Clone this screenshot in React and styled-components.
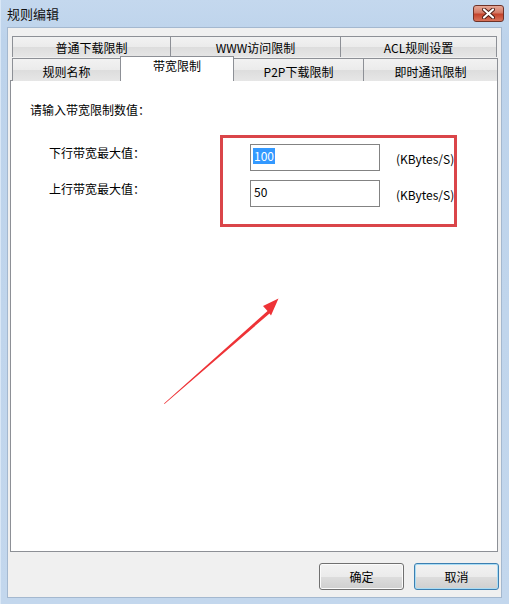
import React from "react";
import styled, { createGlobalStyle } from "styled-components";

const GlobalStyle = createGlobalStyle`
  html, body {
    margin: 0;
    padding: 0;
    background: #fff;
  }
  body {
    font-family: "Noto Sans CJK SC", "Microsoft YaHei", sans-serif;
    font-size: 12px;
    color: #000;
  }
`;

const Window = styled.div`
  position: relative;
  width: 509px;
  height: 604px;
  box-sizing: border-box;
  display: flex;
  flex-direction: column;
  background: linear-gradient(to bottom, #c4d8ee 0%, #bdd3eb 40px, #c3d7ed 100%);
  border-left: 1px solid #d9e7f6;
`;

const TitleBar = styled.div`
  height: 27px;
  flex: none;
  display: flex;
  align-items: center;
  justify-content: space-between;
  padding: 0 5px 0 6px;
`;

const Title = styled.div`
  font-size: 13px;
  line-height: 16px;
  color: #111;
`;

const CloseButton = styled.div`
  width: 31px;
  height: 17px;
  box-sizing: border-box;
  border: 1px solid #6e3228;
  border-radius: 3px;
  background: linear-gradient(to bottom, #e6a897 0%, #d47a66 45%, #c4432c 55%, #d8735a 100%);
  display: flex;
  align-items: center;
  justify-content: center;
`;

const Client = styled.div`
  flex: 1;
  margin: 0 7px 6px 6px;
  border: 1px solid #a4b8cf;
  background: #f0f0f0;
  display: flex;
  flex-direction: column;
  padding: 8px 3px 7px 2px;
`;

const TabStrip = styled.div`
  margin-left: 2px;
  display: flex;
  flex-direction: column;
  position: relative;
  z-index: 1;
`;

const TabRow = styled.div`
  display: flex;
  align-items: flex-end;
  height: ${(p) => (p.$front ? 24 : 21)}px;
  margin-bottom: ${(p) => (p.$front ? -1 : 0)}px;
`;

const Tab = styled.div`
  width: ${(p) => p.$w}px;
  flex: none;
  box-sizing: border-box;
  height: ${(p) => (p.$active ? 25 : p.$front ? 23 : 21)}px;
  border: 1px solid #8d9096;
  border-bottom: none;
  margin-left: -1px;
  &:first-child {
    margin-left: 0;
  }
  background: ${(p) =>
    p.$active ? "#fff" : "linear-gradient(to bottom, #f2f2f2 0%, #ebebeb 50%, #dddddd 51%, #e6e6e6 100%)"};
  display: flex;
  justify-content: center;
  align-items: center;
  padding: ${(p) => (p.$active ? "0 0 6px" : p.$front ? "3px 0 0" : "2px 0 0")};
  line-height: 16px;
  white-space: nowrap;
`;

const Panel = styled.div`
  flex: 1;
  background: #fff;
  border: 1px solid #8d9096;
  padding: 21px 0 0 19px;
`;

const Prompt = styled.div`
  line-height: 16px;
`;

const Form = styled.div`
  margin-top: 26px;
  padding-left: 19px;
  display: flex;
  flex-direction: column;
  gap: 9px;
`;

const Row = styled.div`
  display: flex;
  align-items: flex-start;
`;

const Label = styled.div`
  width: 201px;
  line-height: 16px;
  padding-top: 1px;
`;

const Field = styled.div`
  width: 130px;
  height: 27px;
  box-sizing: border-box;
  border: 1px solid #838383;
  background: #fff;
  padding: 3px 0 0 2px;
  line-height: 16px;
`;

const Value = styled.span`
  display: inline-block;
  padding: 0 1px;
  line-height: 16px;
  background: ${(p) => (p.$selected ? "#3399ff" : "transparent")};
  color: ${(p) => (p.$selected ? "#fff" : "#000")};
`;

const Unit = styled.div`
  margin: 7px 0 0 16px;
  white-space: nowrap;
  line-height: 16px;
`;

const ButtonRow = styled.div`
  margin-top: 11px;
  margin-right: -1px;
  display: flex;
  justify-content: flex-end;
  gap: 10px;
`;

const Button = styled.div`
  width: 85px;
  height: 27px;
  box-sizing: border-box;
  border: 1px solid ${(p) => (p.$default ? "#3c7fb1" : "#707070")};
  border-radius: 3px;
  box-shadow: ${(p) => (p.$default ? "inset 0 0 0 1px #a9dcf4" : "inset 0 0 0 1px #fbfbfb")};
  background: linear-gradient(to bottom, #f2f2f2 0%, #ebebeb 50%, #dddddd 51%, #cfcfcf 100%);
  display: flex;
  align-items: center;
  justify-content: center;
  line-height: 16px;
`;

const Annotation = styled.svg`
  position: absolute;
  left: 0;
  top: 0;
  pointer-events: none;
`;

const rowOne = [
  { label: "普通下载限制", w: 159 },
  { label: "WWW访问限制", w: 171 },
  { label: "ACL规则设置", w: 157 },
];

const rowTwo = [
  { label: "规则名称", w: 109 },
  { label: "带宽限制", w: 114, active: true },
  { label: "P2P下载限制", w: 131 },
  { label: "即时通讯限制", w: 135 },
];

const limits = [
  { label: "下行带宽最大值：", value: "100", selected: true },
  { label: "上行带宽最大值：", value: "50" },
];

export default function App() {
  return (
    <>
      <GlobalStyle />
      <Window>
        <TitleBar>
          <Title>规则编辑</Title>
          <CloseButton>
            <svg width="13" height="11" viewBox="0 0 13 11">
              <path d="M2 1.5 L11 9.5 M11 1.5 L2 9.5" stroke="#4a1a12" strokeWidth="4" strokeLinecap="round" />
              <path d="M2 1.5 L11 9.5 M11 1.5 L2 9.5" stroke="#fff" strokeWidth="2.2" strokeLinecap="round" />
            </svg>
          </CloseButton>
        </TitleBar>
        <Client>
          <TabStrip>
            <TabRow>
              {rowOne.map((t) => (
                <Tab key={t.label} $w={t.w}>
                  {t.label}
                </Tab>
              ))}
            </TabRow>
            <TabRow $front>
              {rowTwo.map((t) => (
                <Tab key={t.label} $w={t.w} $front $active={t.active}>
                  {t.label}
                </Tab>
              ))}
            </TabRow>
          </TabStrip>
          <Panel>
            <Prompt>请输入带宽限制数值：</Prompt>
            <Form>
              {limits.map((l) => (
                <Row key={l.label}>
                  <Label>{l.label}</Label>
                  <Field>
                    <Value $selected={l.selected}>{l.value}</Value>
                  </Field>
                  <Unit>(KBytes/S)</Unit>
                </Row>
              ))}
            </Form>
          </Panel>
          <ButtonRow>
            <Button>确定</Button>
            <Button $default>取消</Button>
          </ButtonRow>
        </Client>
        <Annotation width="509" height="604" viewBox="0 0 509 604">
          <rect x="220.5" y="136.5" width="234" height="89" fill="none" stroke="#da4549" strokeWidth="3" />
          <polygon
            points="163,403.5 266.5,311 262,306 277.5,298.5 270,315.5 268.5,313.5 163.5,404"
            fill="#ee3337"
          />
        </Annotation>
      </Window>
    </>
  );
}
